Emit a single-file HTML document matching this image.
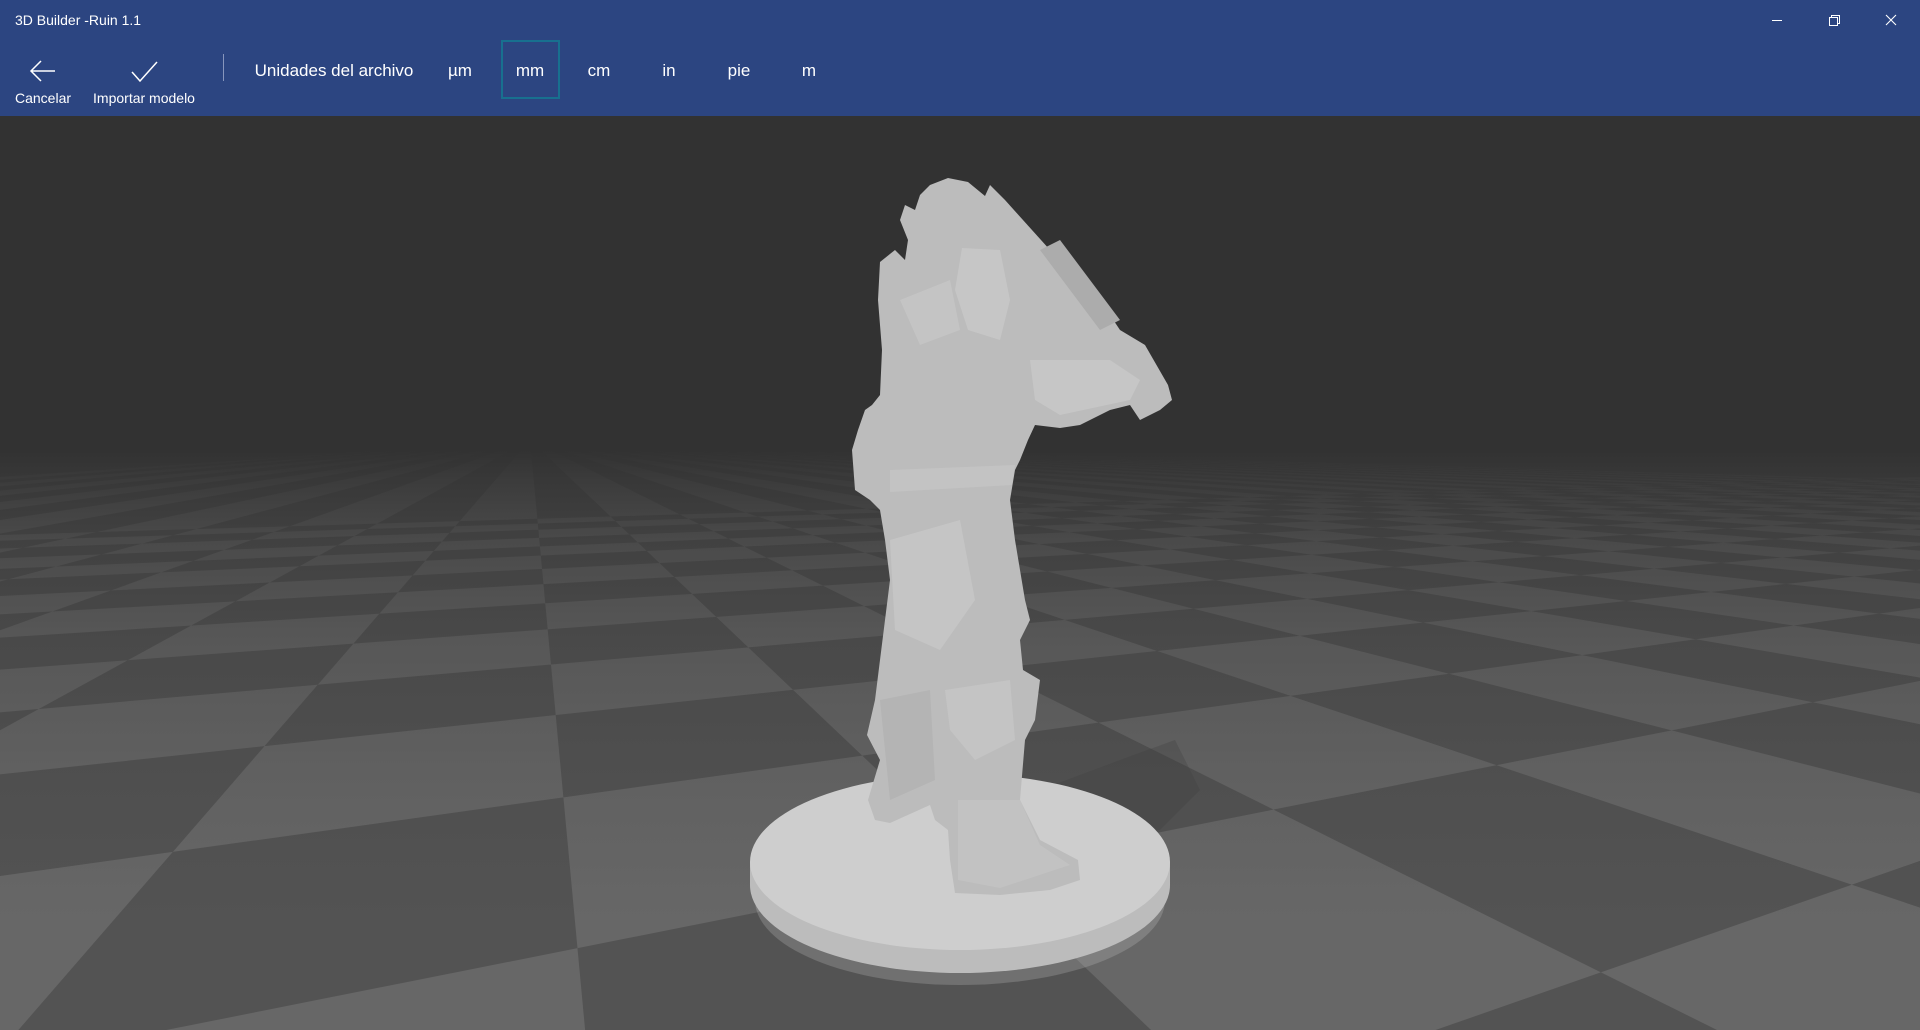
<!DOCTYPE html>
<html><head><meta charset="utf-8"><style>
*{margin:0;padding:0;box-sizing:border-box}
html,body{width:1920px;height:1030px;overflow:hidden;background:#2d2d2d;font-family:"Liberation Sans",sans-serif}
#scene{position:absolute;left:0;top:0;width:1920px;height:1030px;overflow:hidden;
background:linear-gradient(to bottom,#282828 0px,#2c2c2c 300px,#323232 440px,#333 1030px)}
svg{overflow:hidden}
#fog{position:absolute;left:0;top:0;width:1920px;height:1030px;
background:linear-gradient(to bottom,rgba(50,50,50,1) 0px,rgba(50,50,50,1) 450px,rgba(50,50,50,.82) 480px,rgba(50,50,50,.55) 540px,rgba(50,50,50,.3) 640px,rgba(50,50,50,.12) 780px,rgba(50,50,50,0) 920px)}
#header{position:absolute;left:0;top:0;width:1920px;height:116px;background:#2c4581;color:#fff}
.title{position:absolute;left:15px;top:12px;font-size:14px;color:#fff}
.wc{position:absolute;top:6px;width:30px;height:28px}
.lbl{position:absolute;top:90px;font-size:14px;color:#fff;white-space:nowrap;transform:translateX(-50%)}
.unit{position:absolute;top:61px;font-size:17px;color:#fff;transform:translateX(-50%)}
</style></head><body>
<div id="scene">
<svg width="1920" height="1030" style="position:absolute;left:0;top:0">
<rect x="0" y="440" width="1920" height="590" fill="#535353"/>
<path fill="#676767" fill-rule="evenodd" d="
M530 440L-10339 1200L-9609 1200Z M530 440L-8880 1200L-8151 1200Z M530 440L-7422 1200L-6692 1200Z
M530 440L-5963 1200L-5234 1200Z M530 440L-4504 1200L-3775 1200Z M530 440L-3046 1200L-2317 1200Z
M530 440L-1587 1200L-858 1200Z M530 440L-129 1200L601 1200Z M530 440L1330 1200L2059 1200Z
M530 440L2789 1200L3518 1200Z M530 440L4247 1200L4976 1200Z M530 440L5706 1200L6435 1200Z
M530 440L7164 1200L7894 1200Z M530 440L8623 1200L9352 1200Z M530 440L10081 1200L10811 1200Z
M530 440L11540 1200L12269 1200Z M530 440L12998 1200L13728 1200Z M530 440L14457 1200L15186 1200Z
M530 440L15915 1200L16645 1200Z M530 440L17374 1200L18103 1200Z M530 440L18833 1200L19562 1200Z
M530 440L20291 1200L21020 1200Z M530 440L21750 1200L22479 1200Z M530 440L23208 1200L23937 1200Z
M530 440L24667 1200L25396 1200Z M530 440L26125 1200L26854 1200Z
M-100 4336L2020 1776L2020 826L-100 1566Z
M-100 1083L2020 661L2020 594L-100 890Z
M-100 785L2020 559L2020 537L-100 721Z
M-100 677L2020 521L2020 510L-100 644Z
M-100 620L2020 502L2020 495L-100 601Z
M-100 584L2020 490L2020 485L-100 573Z
M-100 562L2020 482L2020 478L-100 552Z
M-100 544L2020 476L2020 474L-100 538Z"/>
</svg>
<div id="fog"></div>
<svg width="1920" height="1030" style="position:absolute;left:0;top:0">
<ellipse cx="960" cy="900" rx="205" ry="85" fill="#c8c8c8" opacity=".25"/>
<path d="M1040 790 L1120 760 L1175 740 L1200 790 L1160 830 L1100 840 Z" fill="#3e3e3e" opacity=".3"/>
<path d="M750 862 L750 885 A210 88 0 0 0 1170 885 L1170 862 Z" fill="#bcbcbc"/>
<ellipse cx="960" cy="862" rx="210" ry="88" fill="#cecece"/>
<path d="M948 178 L968 182 L985 196 L990 185 L1005 200 L1050 250 L1100 300 L1120 330 L1145 345 L1168 385 L1172 400 L1160 410 L1140 420 L1130 405 L1110 410 L1080 425 L1060 428 L1035 425 L1028 440 L1020 460 L1015 470 L1010 500 L1015 540 L1025 600 L1030 620 L1020 640 L1023 670 L1040 680 L1035 720 L1025 740 L1020 800 L1040 840 L1078 860 L1080 880 L1050 890 L1000 895 L955 893 L950 860 L948 830 L935 820 L930 805 L890 823 L875 820 L868 800 L880 760 L867 735 L875 700 L880 660 L885 620 L890 580 L885 540 L880 510 L870 500 L855 490 L852 450 L858 430 L865 410 L872 405 L880 395 L882 350 L878 300 L880 262 L895 250 L905 260 L908 240 L900 220 L905 205 L915 210 L920 195 L930 185 Z" fill="#bcbcbc"/>
<path d="M962 248 L1000 250 L1010 300 L1000 340 L968 330 L955 290 Z" fill="#c6c6c6"/>
<path d="M900 300 L950 280 L960 330 L920 345 Z" fill="#c4c4c4"/>
<path d="M1030 360 L1110 360 L1140 380 L1130 400 L1060 415 L1035 400 Z" fill="#c6c6c6"/>
<path d="M890 470 L1015 465 L1012 485 L890 492 Z" fill="#c3c3c3"/>
<path d="M890 540 L960 520 L975 600 L940 650 L895 630 Z" fill="#c5c5c5"/>
<path d="M945 690 L1010 680 L1015 740 L975 760 L950 730 Z" fill="#c4c4c4"/>
<path d="M1040 250 L1060 240 L1120 320 L1100 330 Z" fill="#acacac"/>
<path d="M880 700 L930 690 L935 780 L890 800 Z" fill="#b4b4b4"/>
<path d="M958 800 L1020 800 L1040 845 L1070 865 L1000 888 L958 880 Z" fill="#c2c2c2"/>
</svg>
</div>
<div id="header">
<div class="title">3D Builder -Ruin 1.1</div>
<svg class="wc" style="left:1762px" viewBox="0 0 30 28"><path d="M10 14.5H20" stroke="#fff" stroke-width="1"/></svg>
<svg class="wc" style="left:1819px" viewBox="0 0 30 28"><path d="M10.5 11.5h8v8h-8z M12.5 11.5v-2h8v8h-2" stroke="#fff" stroke-width="1" fill="none"/></svg>
<svg class="wc" style="left:1876px" viewBox="0 0 30 28"><path d="M10 9L20 19M20 9L10 19" stroke="#fff" stroke-width="1.1"/></svg>
<svg style="position:absolute;left:28px;top:58px" width="30" height="26" viewBox="0 0 30 26"><path d="M27 13H3M13 3L3 13L13 23" stroke="#fff" stroke-width="1.5" fill="none"/></svg>
<div class="lbl" style="left:43px">Cancelar</div>
<svg style="position:absolute;left:130px;top:60px" width="30" height="24" viewBox="0 0 30 24"><path d="M2 12L10 21L27 2" stroke="#fff" stroke-width="1.5" fill="none"/></svg>
<div class="lbl" style="left:144px">Importar modelo</div>
<div style="position:absolute;left:223px;top:54px;width:1px;height:27px;background:#8796bd"></div>
<div class="unit" style="left:334px">Unidades del archivo</div>
<div class="unit" style="left:460px">µm</div>
<div style="position:absolute;left:501px;top:40px;width:59px;height:59px;border:2px solid #18708f"></div>
<div class="unit" style="left:530px">mm</div>
<div class="unit" style="left:599px">cm</div>
<div class="unit" style="left:669px">in</div>
<div class="unit" style="left:739px">pie</div>
<div class="unit" style="left:809px">m</div>
</div>
</body></html>
